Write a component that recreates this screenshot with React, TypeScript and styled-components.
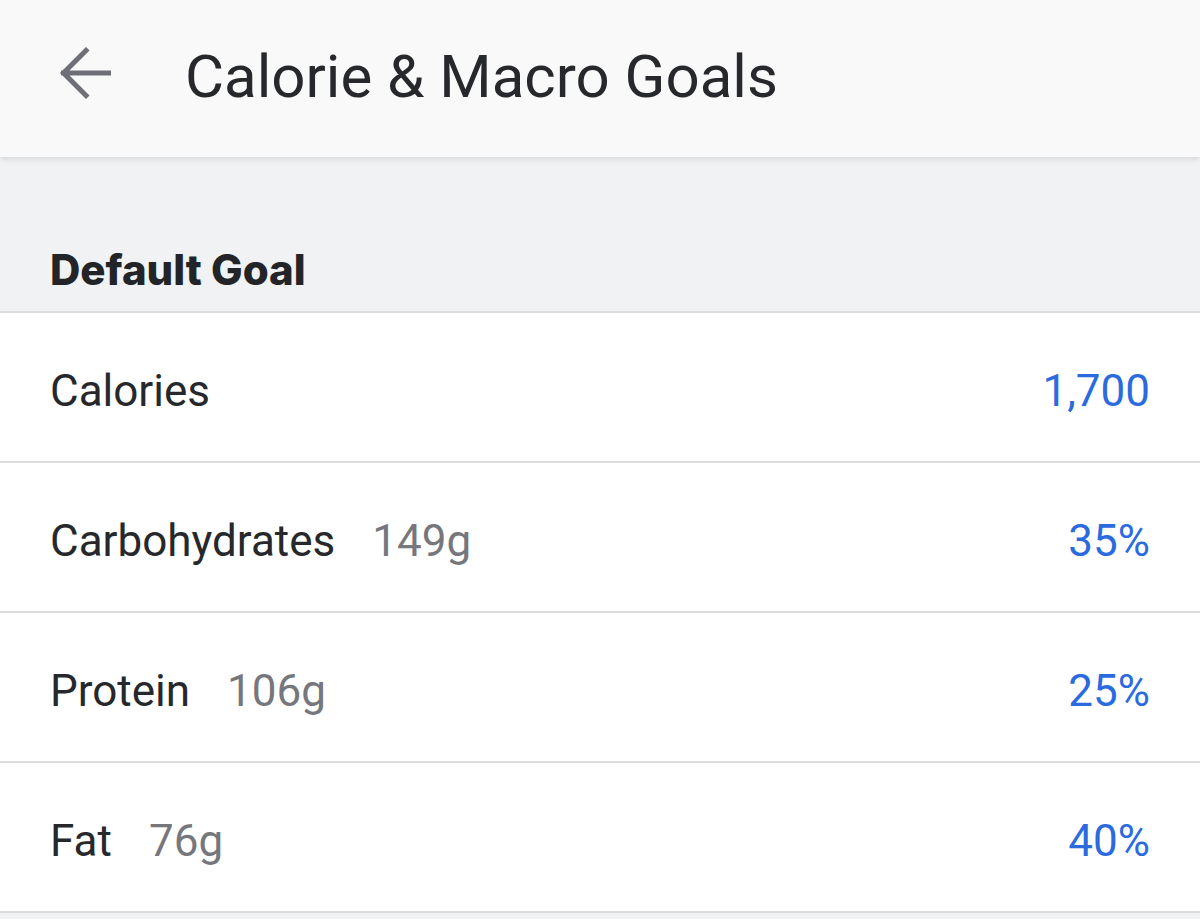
import styled, { createGlobalStyle } from "styled-components";

const GlobalStyle = createGlobalStyle`
  html, body {
    margin: 0;
    padding: 0;
    background: #f1f2f4;
  }
  body {
    font-family: Roboto, "Noto Sans", sans-serif;
  }
`;

type Goal = {
  label: string;
  grams?: string;
  value: string;
};

const goals: Goal[] = [
  { label: "Calories", value: "1,700" },
  { label: "Carbohydrates", grams: "149g", value: "35%" },
  { label: "Protein", grams: "106g", value: "25%" },
  { label: "Fat", grams: "76g", value: "40%" },
];

export default function App() {
  return (
    <Page>
      <GlobalStyle />
      <Header>
        <BackButton aria-label="Back">
          <svg width="52" height="52" viewBox="0 0 52 52">
            <path
              d="M50 26H4.5M27 3.5L4.5 26L27 48.5"
              fill="none"
              stroke="#6e6f77"
              strokeWidth="5"
              strokeLinecap="square"
            />
          </svg>
        </BackButton>
        <Title>Calorie &amp; Macro Goals</Title>
      </Header>
      <SectionHead>
        <SectionTitle>Default Goal</SectionTitle>
      </SectionHead>
      <List>
        {goals.map((g) => (
          <Row key={g.label}>
            <RowLeft>
              <Label>{g.label}</Label>
              {g.grams && <Grams>{g.grams}</Grams>}
            </RowLeft>
            <Value>{g.value}</Value>
          </Row>
        ))}
      </List>
    </Page>
  );
}

const Page = styled.main`
  width: 1200px;
  height: 919px;
  background: #f1f2f4;
  overflow: hidden;
`;

const Header = styled.header`
  height: 157px;
  background: #f9f9fa;
  display: flex;
  align-items: center;
  box-shadow: 0 2px 6px rgba(0, 0, 0, 0.12);
  position: relative;
  z-index: 1;
  padding-bottom: 4px;
  box-sizing: border-box;
`;

const BackButton = styled.button`
  border: none;
  background: none;
  padding: 0;
  margin: 0 0 8px 59px;
  width: 52px;
  height: 52px;
  display: flex;
  align-items: center;
  justify-content: center;
  cursor: pointer;
`;

const Title = styled.h1`
  margin: 0 0 0 74px;
  font-family: Roboto, sans-serif;
  font-weight: 400;
  font-size: 60px;
  color: #26282b;
`;

const SectionHead = styled.div`
  height: 156px;
  display: flex;
  align-items: flex-end;
  padding: 0 50px 16px;
  box-sizing: border-box;
  border-bottom: 2px solid #dcdcde;
`;

const SectionTitle = styled.h2`
  margin: 0;
  font-family: Inter, "Liberation Sans", sans-serif;
  font-weight: 800;
  font-size: 42px;
  color: #222427;
`;

const List = styled.div`
  display: flex;
  flex-direction: column;
`;

const Row = styled.div`
  height: 150px;
  box-sizing: border-box;
  display: flex;
  align-items: center;
  justify-content: space-between;
  padding: 8px 50px 0;
  background: #ffffff;
  border-bottom: 2px solid #dcdcde;
`;

const RowLeft = styled.div`
  display: flex;
  align-items: baseline;
  gap: 37px;
`;

const Label = styled.span`
  font-size: 44px;
  color: #26282b;
`;

const Grams = styled.span`
  font-size: 44px;
  color: #76777d;
`;

const Value = styled.span`
  font-size: 44px;
  color: #2b6bde;
`;
